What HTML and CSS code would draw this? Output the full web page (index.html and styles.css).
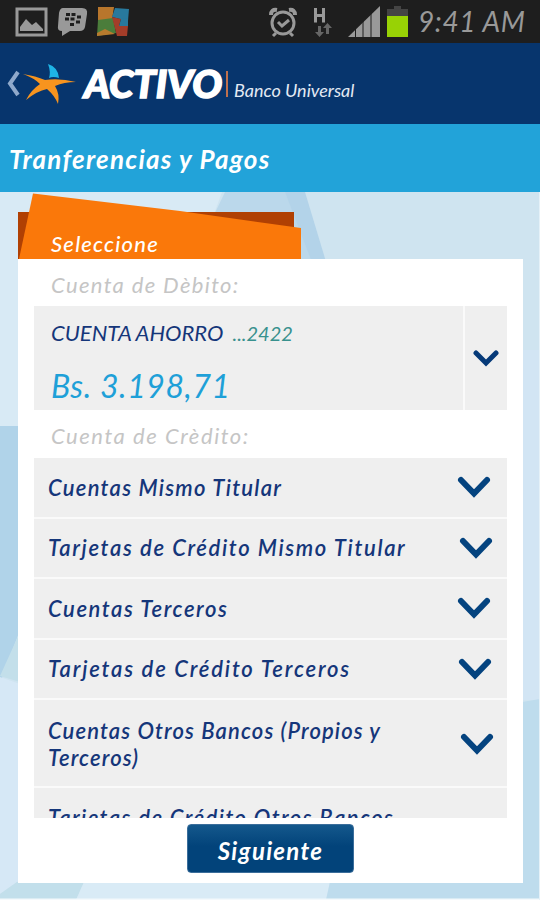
FILE: index.html
```
<!DOCTYPE html>
<html lang="es">
<head>
<meta charset="utf-8">
<title>Activo Banco Universal</title>
<link rel="stylesheet" href="styles.css">
</head>
<body>
<div class="statusbar">
  <svg class="status-left" width="130" height="43" viewBox="0 0 130 43">
    <rect x="17" y="9" width="29" height="26" fill="none" stroke="#999" stroke-width="3"/>
    <path d="M20 31V27L26 19L32 25L36 22L43 29V31Z" fill="#999"/>
    <path d="M63 8H82Q88 8 87 14L85 27Q84 31 80 31H70L62 36V31Q57 31 58 26L59 13Q60 8 63 8Z" fill="#999"/>
    <path d="M66 13h4v3h-4zM71.500 13h4v3h-4zM65 17.500h4v3h-4zM70.500 17.500h4v3h-4zM77 15.500h4v3h-4zM76 20.500h4v3h-4zM70 23h4v3h-4z" fill="#1e1e1e"/>
    <path d="M98 7L114 7L112 20L98 24Z" fill="#b8762c"/>
    <path d="M98 20L113 18L116 33L97 36Z" fill="#4b7d3b"/>
    <path d="M97 33L105 29L115 34L97 36Z" fill="#b77b2e"/>
    <path d="M115 8L129 9L128 21L112 17Z" fill="#28799d"/>
    <path d="M112 17L121 19L119 26L128 26L127 36H117Z" fill="#a33d29"/>
    <path d="M121 19L128 18V26L119 26Z" fill="#28799d"/>
  </svg>
  <svg class="status-right" width="144" height="43" viewBox="266 0 144 43">
    <g fill="none" stroke="#999" stroke-width="3">
      <circle cx="283" cy="23" r="11"/><path d="M278 22L282 26L289 20M276 33L273 36M290 33L293 36"/>
      <path d="M271 15Q271 9 277 10M289 10Q295 9 295 15" stroke-width="4"/>
      <path d="M315.500 8V22.500M323.500 8V22.500M315 15.500H323"/>
    </g>
    <path d="M318 26h3v6h3l-4.500 5l-4.500-5h3zM326 34h3V28h3l-4.500-5l-4.500 5h3z" fill="#666"/>
    <path d="M348 37L380 6V37Z" fill="#999"/>
    <path d="M355.500 20V37M363 10V37M371 10V37" stroke="#1e1e1e"/>
    <path d="M394 6H401V9H408V17H387V9H394Z" fill="#444"/><path d="M387 16H408V37H387Z" fill="#98d205"/>
  </svg>
  <span class="clock">9:41 AM</span>
</div>
<header class="brandbar">
  <svg class="logo" width="78" height="81" viewBox="0 43 78 81">
    <path d="M18 72L10 83.500L18 95" fill="none" stroke="#8fa9cb" stroke-width="4"/>
    <path d="M48 64Q58 67 59 78Q53 76 49 78Q51 72 48 64Z" fill="#1eb4e6"/>
    <path d="M23 74Q36 76 45 80Q60 78 76 82Q64 82 55 86Q60 94 58 104Q55 96 47 89Q37 91 26 100Q31 90 40 84Q34 78 23 74Z" fill="#f7941e"/>
  </svg>
  <span class="brand">ACTIVO</span>
  <span class="brand-line"></span>
  <span class="brand-sub">Banco Universal</span>
</header>
<h1 class="title"><span>Tranferencias y Pagos</span></h1>
<main class="page">
  <svg class="backdrop" width="540" height="708" viewBox="0 192 540 708">
    <rect y="192" width="540" height="708" fill="#cfe4f0"/>
    <path d="M0 192H222L190 280H0Z" fill="#d8eaf5"/>
    <path d="M225 192H289L320 265H190Z" fill="#bbd8eb"/>
    <path d="M285 192H305L327 265H313Z" fill="#b3d3e9"/>
    <path d="M0 260H20V427H0Z" fill="#d8eaf5"/>
    <path d="M0 426H20V630L0 683Z" fill="#b0d3e9"/>
    <path d="M20 632L0 676L20 682Z" fill="#c3dfea"/>
    <path d="M0 677L20 684V880L0 894Z" fill="#d6e8f6"/>
    <path d="M522 350H540V700H522Z" fill="#d2e5f4"/>
    <path d="M522 702L540 699V900H522Z" fill="#bedced"/>
    <path d="M0 894L17 882H84L76 900H0Z" fill="#c2dfeb"/>
    <path d="M84 882H330L326 900H76Z" fill="#d9ebf6"/>
    <path d="M330 882H540V900H326Z" fill="#bedced"/>
    <path d="M0 899.500H540" stroke="#f4f9fc" stroke-width="2"/>
    <path d="M539.500 192V900" stroke="#e5f1f8" stroke-width="1"/>
  </svg>
  <div class="tab">
    <svg class="ribbon" width="284" height="66" viewBox="18 193 284 66">
      <path d="M18 212H294V259H18Z" fill="#b04003"/>
      <path d="M33 193.500L180 211L301 228V259H19Z" fill="#fa780a"/>
    </svg>
    <span class="tab-text">Seleccione</span>
  </div>
  <section class="card">
    <div class="label debit-label">Cuenta de Dèbito:</div>
    <div class="account">
      <div class="account-main">
        <div class="account-name"><span class="name">CUENTA AHORRO</span><span class="digits">...2422</span></div>
        <div class="balance">Bs. 3.198,71</div>
      </div>
      <div class="account-toggle"><svg width="26" height="18" viewBox="0 0 26 18"><path d="M3 4L13 14L23 4"/></svg></div>
    </div>
    <div class="label credit-label">Cuenta de Crèdito:</div>
    <div class="list">
      <div class="row r1"><span>Cuentas Mismo Titular</span><svg width="34" height="24" viewBox="0 0 34 24"><path d="M4 5L17 18.500L30 5"/></svg></div>
      <div class="row r2"><span>Tarjetas de Crédito Mismo Titular</span><svg width="34" height="24" viewBox="0 0 34 24"><path d="M4 5L17 18.500L30 5"/></svg></div>
      <div class="row r3"><span>Cuentas Terceros</span><svg width="34" height="24" viewBox="0 0 34 24"><path d="M4 5L17 18.500L30 5"/></svg></div>
      <div class="row r4"><span>Tarjetas de Crédito Terceros</span><svg width="34" height="24" viewBox="0 0 34 24"><path d="M4 5L17 18.500L30 5"/></svg></div>
      <div class="row r5"><span>Cuentas Otros Bancos (Propios y<br>Terceros)</span><svg width="34" height="24" viewBox="0 0 34 24"><path d="M4 5L17 18.500L30 5"/></svg></div>
      <div class="row r6"><span>Tarjetas de Crédito Otros Bancos</span></div>
    </div>
    <button class="next">Siguiente</button>
  </section>
</main>
</body>
</html>
```
FILE: styles.css
```
* { box-sizing: border-box; }
body { margin: 0; width: 540px; height: 900px; overflow: hidden; font-family: Lato, "Open Sans", sans-serif; font-style: italic; }
svg { display: block; flex: none; }
.statusbar { height: 43px; background: #1e1e1e; display: flex; align-items: center; }
.status-right { margin-left: 136px; }
.clock { margin-left: 8px; font-size: 28px; line-height: 43px; color: #999; white-space: nowrap; letter-spacing: 0.6px; }
.brandbar { height: 81px; background: #07356d; display: flex; align-items: flex-start; }
.brand { margin-left: 6px; margin-top: 20px; width: 138px; font-weight: 900; font-size: 37px; line-height: 42px; color: #fff; white-space: nowrap; -webkit-text-stroke: 1.5px #fff; transform: scaleX(1.07); transform-origin: left; }
.brand-line { margin: 28px 0 0 4px; width: 2px; height: 26px; background: #bf704d; }
.brand-sub { margin-left: 6px; margin-top: 35px; font-size: 18px; line-height: 24px; color: #e3eaf4; white-space: nowrap; }
.title { margin: 0; height: 68px; padding: 0 9px; background: #22a3d9; color: #fff; font-size: 26px; font-weight: 700; line-height: 71px; letter-spacing: 1.27px; white-space: nowrap; }
.page { position: relative; height: 708px; padding: 1px 0 0 18px; }
.backdrop { position: absolute; left: 0; top: 0; z-index: -1; }
.tab { height: 66px; position: relative; }
.tab-text { position: absolute; left: 33px; top: 37px; color: #fff; font-size: 22px; line-height: 28px; font-weight: 500; letter-spacing: 1.2px; }
.card { width: 505px; height: 624px; background: #fff; padding: 0 16px; overflow: hidden; }
.label { height: 48px; padding: 12px 0 0 17px; font-size: 22px; line-height: 28px; color: #c5c5c5; white-space: nowrap; letter-spacing: 1.55px; }
.debit-label { height: 47px; letter-spacing: 1.35px; }
.account { height: 104px; width: 473px; background: #efefef; display: flex; }
.account-main { flex: 1; padding: 13px 0 0 17px; border-right: 2px solid #fafafa; }
.account-name { display: flex; align-items: baseline; color: #15367a; font-size: 22px; line-height: 28px; white-space: nowrap; }
.digits { margin-left: 9px; color: #38918e; font-size: 20px; }
.balance { margin-top: 19px; color: #1ea0d8; font-size: 32px; line-height: 40px; letter-spacing: 0.6px; white-space: nowrap; }
.account-toggle { width: 42px; display: flex; align-items: center; padding-left: 8px; }
.account-toggle path, .row path { fill: none; stroke: #063a79; stroke-width: 5; stroke-linecap: round; stroke-linejoin: miter; }
.row path { stroke: #04437f; stroke-width: 6; }
.list { height: 360px; width: 473px; overflow: hidden; background: #efefef; }
.row { height: 60.500px; padding: 0 14px; display: flex; align-items: center; justify-content: space-between; border-bottom: 2px solid #fafafa; color: #15367a; font-size: 22px; font-weight: 600; line-height: 27px; white-space: nowrap; }
.r1 { letter-spacing: 1.25px; }
.r2 { letter-spacing: 1.62px; }
.r3 { letter-spacing: 1.55px; }
.r4 { letter-spacing: 1.8px; }
.r6 { letter-spacing: 1.42px; }
.r1 svg, .r3 svg { margin-right: 2px; }
.r4 svg { margin-right: 1px; }
.r5 { height: 88px; padding-top: 2px; letter-spacing: 1.12px; }
.r5 svg { margin-right: -1px; }
.next { display: block; margin: 6px 0 0 153px; width: 167px; height: 49px; padding: 4px 0 0; border: 1px solid #3b6e9b; border-radius: 4px; background: linear-gradient(#14588c, #02437a 45%, #02437a); color: #fff; font: italic 700 24px/34px Lato, sans-serif; letter-spacing: 1.3px; }
```
